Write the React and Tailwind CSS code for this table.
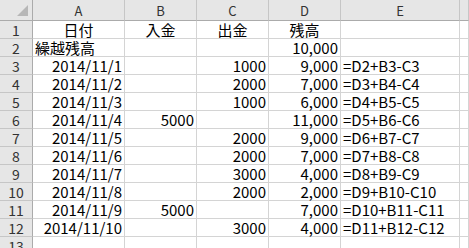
import React from "react";

const rows = [
  ["日付", "入金", "出金", "残高", ""],
  ["繰越残高", "", "", "10,000", ""],
  ["2014/11/1", "", "1000", "9,000", "=D2+B3-C3"],
  ["2014/11/2", "", "2000", "7,000", "=D3+B4-C4"],
  ["2014/11/3", "", "1000", "6,000", "=D4+B5-C5"],
  ["2014/11/4", "5000", "", "11,000", "=D5+B6-C6"],
  ["2014/11/5", "", "2000", "9,000", "=D6+B7-C7"],
  ["2014/11/6", "", "2000", "7,000", "=D7+B8-C8"],
  ["2014/11/7", "", "3000", "4,000", "=D8+B9-C9"],
  ["2014/11/8", "", "2000", "2,000", "=D9+B10-C10"],
  ["2014/11/9", "5000", "", "7,000", "=D10+B11-C11"],
  ["2014/11/10", "", "3000", "4,000", "=D11+B12-C12"],
  ["", "", "", "", ""],
];

const font = { fontFamily: '"Noto Sans CJK JP", "Noto Sans", sans-serif' };

function align(r, c) {
  if (r === 0) return "justify-center";
  if (r === 1 && c === 0) return "justify-start";
  if (c === 4) return "justify-start";
  return "justify-end";
}

export default function App() {
  return (
    <div className="w-[469px] h-[248px] overflow-hidden bg-white text-black" style={font}>
      <div className="grid grid-cols-[33px_92px_72px_72px_72px_119px_1fr] grid-rows-[21px_repeat(13,18px)]">
        {/* header row */}
        <div className="relative bg-[#e6e6e6] border-r border-b border-[#ababab]">
          <div className="absolute right-[4px] bottom-[4px] w-0 h-0 border-l-[11px] border-l-transparent border-b-[11px] border-b-[#b7b7b7]" />
        </div>
        {["A", "B", "C", "D", "E", ""].map((l, i) => (
          <div
            key={i}
            className="bg-[#e6e6e6] border-r border-b border-r-[#c6c6c6] border-b-[#ababab] flex items-center justify-center text-[13px] text-[#333] leading-none pt-[1px]"
          >
            {l}
          </div>
        ))}
        {rows.map((row, r) => (
          <React.Fragment key={r}>
            <div className="bg-[#e6e6e6] border-r border-b border-r-[#ababab] border-b-[#c6c6c6] flex items-end justify-center text-[14px] text-[#333] leading-none pb-[1px]">
              {r + 1}
            </div>
            {row.map((v, c) => (
              <div
                key={c}
                className={`border-r border-b border-[#d4d4d4] flex items-end ${align(r, c)} px-[2px] text-[15px] leading-none pb-[1px] whitespace-nowrap overflow-visible`}
              >
                {v}
              </div>
            ))}
            <div className="border-r border-b border-[#d4d4d4]" />
          </React.Fragment>
        ))}
      </div>
    </div>
  );
}
